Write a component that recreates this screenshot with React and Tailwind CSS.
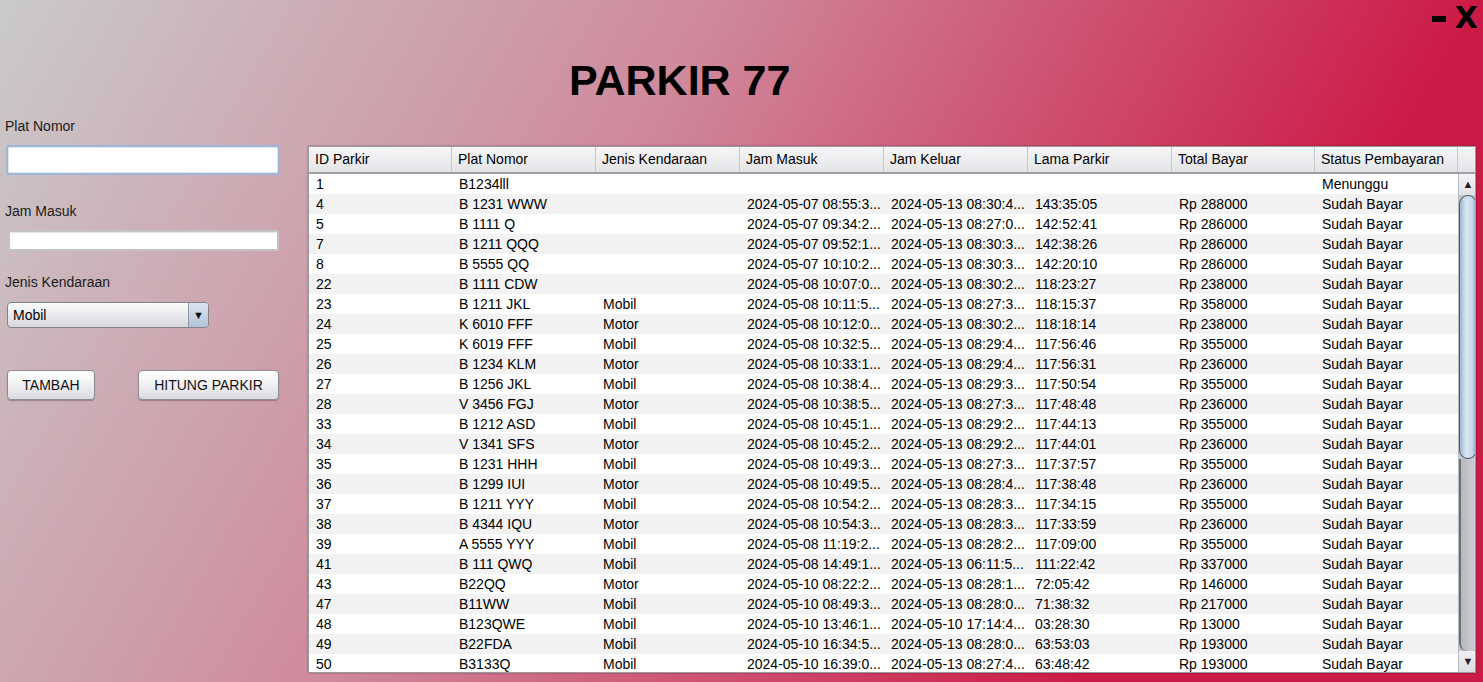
import React from 'react';

const columns = ['ID Parkir', 'Plat Nomor', 'Jenis Kendaraan', 'Jam Masuk', 'Jam Keluar', 'Lama Parkir', 'Total Bayar', 'Status Pembayaran'];

const rows = [
  ['1', 'B1234lll', '', '', '', '', '', 'Menunggu'],
  ['4', 'B 1231 WWW', '', '2024-05-07 08:55:3...', '2024-05-13 08:30:4...', '143:35:05', 'Rp 288000', 'Sudah Bayar'],
  ['5', 'B 1111 Q', '', '2024-05-07 09:34:2...', '2024-05-13 08:27:0...', '142:52:41', 'Rp 286000', 'Sudah Bayar'],
  ['7', 'B 1211 QQQ', '', '2024-05-07 09:52:1...', '2024-05-13 08:30:3...', '142:38:26', 'Rp 286000', 'Sudah Bayar'],
  ['8', 'B 5555 QQ', '', '2024-05-07 10:10:2...', '2024-05-13 08:30:3...', '142:20:10', 'Rp 286000', 'Sudah Bayar'],
  ['22', 'B 1111 CDW', '', '2024-05-08 10:07:0...', '2024-05-13 08:30:2...', '118:23:27', 'Rp 238000', 'Sudah Bayar'],
  ['23', 'B 1211 JKL', 'Mobil', '2024-05-08 10:11:5...', '2024-05-13 08:27:3...', '118:15:37', 'Rp 358000', 'Sudah Bayar'],
  ['24', 'K 6010 FFF', 'Motor', '2024-05-08 10:12:0...', '2024-05-13 08:30:2...', '118:18:14', 'Rp 238000', 'Sudah Bayar'],
  ['25', 'K 6019 FFF', 'Mobil', '2024-05-08 10:32:5...', '2024-05-13 08:29:4...', '117:56:46', 'Rp 355000', 'Sudah Bayar'],
  ['26', 'B 1234 KLM', 'Motor', '2024-05-08 10:33:1...', '2024-05-13 08:29:4...', '117:56:31', 'Rp 236000', 'Sudah Bayar'],
  ['27', 'B 1256 JKL', 'Mobil', '2024-05-08 10:38:4...', '2024-05-13 08:29:3...', '117:50:54', 'Rp 355000', 'Sudah Bayar'],
  ['28', 'V 3456 FGJ', 'Motor', '2024-05-08 10:38:5...', '2024-05-13 08:27:3...', '117:48:48', 'Rp 236000', 'Sudah Bayar'],
  ['33', 'B 1212 ASD', 'Mobil', '2024-05-08 10:45:1...', '2024-05-13 08:29:2...', '117:44:13', 'Rp 355000', 'Sudah Bayar'],
  ['34', 'V 1341 SFS', 'Motor', '2024-05-08 10:45:2...', '2024-05-13 08:29:2...', '117:44:01', 'Rp 236000', 'Sudah Bayar'],
  ['35', 'B 1231 HHH', 'Mobil', '2024-05-08 10:49:3...', '2024-05-13 08:27:3...', '117:37:57', 'Rp 355000', 'Sudah Bayar'],
  ['36', 'B 1299 IUI', 'Motor', '2024-05-08 10:49:5...', '2024-05-13 08:28:4...', '117:38:48', 'Rp 236000', 'Sudah Bayar'],
  ['37', 'B 1211 YYY', 'Mobil', '2024-05-08 10:54:2...', '2024-05-13 08:28:3...', '117:34:15', 'Rp 355000', 'Sudah Bayar'],
  ['38', 'B 4344 IQU', 'Motor', '2024-05-08 10:54:3...', '2024-05-13 08:28:3...', '117:33:59', 'Rp 236000', 'Sudah Bayar'],
  ['39', 'A 5555 YYY', 'Mobil', '2024-05-08 11:19:2...', '2024-05-13 08:28:2...', '117:09:00', 'Rp 355000', 'Sudah Bayar'],
  ['41', 'B 111 QWQ', 'Mobil', '2024-05-08 14:49:1...', '2024-05-13 06:11:5...', '111:22:42', 'Rp 337000', 'Sudah Bayar'],
  ['43', 'B22QQ', 'Motor', '2024-05-10 08:22:2...', '2024-05-13 08:28:1...', '72:05:42', 'Rp 146000', 'Sudah Bayar'],
  ['47', 'B11WW', 'Mobil', '2024-05-10 08:49:3...', '2024-05-13 08:28:0...', '71:38:32', 'Rp 217000', 'Sudah Bayar'],
  ['48', 'B123QWE', 'Mobil', '2024-05-10 13:46:1...', '2024-05-10 17:14:4...', '03:28:30', 'Rp 13000', 'Sudah Bayar'],
  ['49', 'B22FDA', 'Mobil', '2024-05-10 16:34:5...', '2024-05-13 08:28:0...', '63:53:03', 'Rp 193000', 'Sudah Bayar'],
  ['50', 'B3133Q', 'Mobil', '2024-05-10 16:39:0...', '2024-05-13 08:27:4...', '63:48:42', 'Rp 193000', 'Sudah Bayar'],
];

// header + body share the same column widths so the cells line up
const colGrid = 'grid grid-cols-[143px_144px_144px_144px_144px_144px_143px_143px]';

const ScrollBar = () => (
  <div className="w-[19px] shrink-0 flex flex-col bg-[#c3c5c9] border-l border-[#b8bbc0]">
    <div className="h-[21px] shrink-0 flex items-center justify-center text-[11px] text-[#222] bg-[linear-gradient(#f4f4f5,#e1e2e5)]">▲</div>
    <div className="h-[264px] shrink-0 rounded-[9px] border border-[#4a5766] bg-[linear-gradient(90deg,#9fb8d0,#d9e6f2_40%,#c6d8ea_75%,#94adc6)]" />
    <div className="flex-1 rounded-b-[8px] border-l-2 border-[#6b7077] bg-[linear-gradient(90deg,#b6b9bf,#cfd1d5)]" />
    <div className="h-[21px] shrink-0 flex items-center justify-center text-[11px] text-[#222] bg-[linear-gradient(#f0f0f2,#dcdde1)]">▼</div>
  </div>
);

const DataTable = () => (
  <div className="w-[1168px] h-[527px] flex flex-col bg-white border border-[#9a9a9e] shadow-[0_0_2px_rgba(0,0,0,0.35)] text-[14px] text-black">
    <div className="flex h-[27px] shrink-0 bg-[linear-gradient(#f6f6f7,#e3e4e7)] border-b-2 border-[#9ea0a4]">
      <div className={colGrid}>
        {columns.map((c) => (
          <div key={c} className="px-[6px] flex items-center border-r border-[#c6c8cc]">{c}</div>
        ))}
      </div>
      <div className="flex-1" />
    </div>
    <div className="flex flex-1 min-h-0 overflow-hidden">
      <div className="flex-1 flex flex-col">
        {rows.map((r, i) => (
          <div key={r[0]} className={`${colGrid} h-[20px] shrink-0 leading-[20px] ${i % 2 === 1 ? 'bg-[#f2f2f2]' : 'bg-white'}`}>
            {r.map((cell, j) => (
              <div key={j} className="px-[7px] whitespace-nowrap overflow-hidden">{cell}</div>
            ))}
          </div>
        ))}
      </div>
      <ScrollBar />
    </div>
  </div>
);

const SwingButton = ({ label, className }) => (
  <button className={`h-[30px] rounded-[4px] border border-[#8b8d91] bg-[linear-gradient(#ffffff,#f0f0f2_50%,#d9dbe0)] shadow-[0_1px_1px_rgba(0,0,0,0.25)] text-[14px] text-[#111] ${className}`}>
    {label}
  </button>
);

export default function App() {
  return (
    <div className="w-[1483px] h-[682px] overflow-hidden flex flex-col bg-[linear-gradient(120deg,#cacaca_0%,#cf8a9c_38%,#cc1a46_79%)] font-['Liberation_Sans',Arial,sans-serif]">
      <div className="h-[116px] flex shrink-0">
        <div className="flex-1 pl-[569px] pt-[59px]">
          <h1 className="text-[43px] leading-none font-bold text-black">PARKIR 77</h1>
        </div>
        <div className="flex items-start gap-[9px] pt-[3px] pr-[5px]">
          <span className="mt-[13px] w-[14px] h-[6px] bg-black" aria-label="minimize" />
          <span className="text-[30px] leading-none font-bold text-black font-['DejaVu_Sans',sans-serif]">X</span>
        </div>
      </div>

      <div className="flex">
        <div className="w-[308px] shrink-0 flex flex-col text-[14px] text-[#1b1b1b]">
          <div className="pl-[5px] leading-[20px]">Plat Nomor</div>
          <div className="mt-[9px] ml-[6px] w-[274px] h-[30px] bg-white border-2 border-[#9fb6d4] shadow-[inset_0_0_0_1px_#dfe8f2]" />
          <div className="mt-[26px] pl-[5px] leading-[20px]">Jam Masuk</div>
          <div className="mt-[9px] ml-[8px] w-[271px] h-[21px] bg-white border-2 border-[#c3c3c5] shadow-[inset_0_1px_1px_#e6e6e6]" />
          <div className="mt-[21px] pl-[5px] leading-[20px]">Jenis Kendaraan</div>
          <div className="mt-[10px] ml-[7px] w-[202px] h-[26px] flex rounded-[4px] border border-[#818388] overflow-hidden bg-[linear-gradient(#fbfbfb,#e9eaed_50%,#d6d8dc)]">
            <div className="flex-1 pl-[5px] flex items-center text-[14px] text-black">Mobil</div>
            <div className="w-[20px] flex items-center justify-center text-[11px] text-[#111] border-l border-[#8c98a6] bg-[linear-gradient(#dbe4ee,#b4c4d6)]">▼</div>
          </div>
          <div className="mt-[42px] flex">
            <SwingButton label="TAMBAH" className="ml-[7px] w-[88px]" />
            <SwingButton label="HITUNG PARKIR" className="ml-[43px] w-[141px]" />
          </div>
        </div>

        <div className="mt-[30px]">
          <DataTable />
        </div>
      </div>
    </div>
  );
}
